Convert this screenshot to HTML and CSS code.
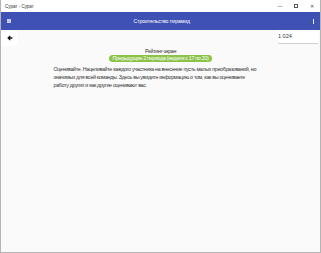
FILE: index.html
```html
<!DOCTYPE html>
<html lang="ru">
<head>
    <meta charset="UTF-8">
    <title>Сурат - Сурат</title>
    <link rel="stylesheet" href="styles.css">
</head>
<body>
    <div class="window">
        <div class="titlebar">
            <span class="app-name">Сурат - Сурат</span>
            <div class="controls">
                <span class="ctl">&#8212;</span>
                <span class="ctl max"></span>
                <span class="ctl">&#10005;</span>
            </div>
        </div>
        <div class="appbar">
            <span class="burger"></span>
            <span class="appbar-title">Строительство пирамид</span>
            <span class="kebab"></span>
        </div>
        <div class="toolbar">
            <div class="back">
                <svg width="6" height="6" viewBox="0 0 10 10">
                    <path d="M9 5H2M5.5 1.5L2 5L5.5 8.5" fill="none" stroke="#111" stroke-width="2.2"/>
                </svg>
            </div>
            <div class="value">1 024</div>
        </div>
        <div class="content">
            <div class="screen-name">Рейтинг-экран</div>
            <div class="period">Предыдущие 2 периода (недели с 17 по 20)</div>
            <p class="intro">Оценивайте. Нацеливайте каждого участника на внесение пусть малых преобразований, но значимых для всей команды. Здесь вы увидите информацию о том, как вы оцениваете<br>работу других и как другие оценивают вас.</p>
        </div>
    </div>
</body>
</html>
```

FILE: styles.css
```css
body {
    margin: 0;
    font-family: 'Liberation Sans', Arial, sans-serif;
    background: #fafafa;
}
.window {
    box-sizing: border-box;
    width: 321px;
    height: 253px;
    border: 1px solid #b4b4b4;
    border-top: none;
    background: #fafafa;
    display: flex;
    flex-direction: column;
}
.titlebar {
    height: 12px;
    background: #fff;
    display: flex;
    align-items: center;
    justify-content: space-between;
    padding-left: 4px;
}
.app-name {
    font-size: 4.5px;
    color: #333;
}
.controls {
    display: flex;
    align-items: center;
}
.ctl {
    width: 16px;
    text-align: center;
    font-size: 5px;
    color: #444;
}
.ctl.max {
    width: 4px;
    height: 4px;
    border: 1px solid #555;
    margin: 0 6px;
    box-sizing: border-box;
}
.appbar {
    height: 18px;
    background: #3f51b5;
    display: flex;
    align-items: center;
    padding: 0 6px 0 6px;
}
.burger {
    width: 4px;
    height: 4px;
    background: #c5cae9;
}
.appbar-title {
    flex: 1;
    text-align: center;
    color: #fff;
    font-size: 5.2px;
    letter-spacing: -0.1px;
}
.kebab {
    width: 1.5px;
    height: 5px;
    background: #e8eaf6;
}
.toolbar {
    display: flex;
    justify-content: space-between;
    height: 16px;
}
.back {
    width: 17px;
    height: 16px;
    background: #fff;
    border-bottom-right-radius: 3px;
    display: flex;
    align-items: center;
    justify-content: center;
}
.value {
    width: 40px;
    margin-right: 2px;
    height: 13px;
    border-bottom: 1.5px solid #d0d0d0;
    font-size: 5.5px;
    color: #333;
    line-height: 12px;
    background: #fff;
}
.content {
    width: 214px;
    margin: 2px auto 0;
    display: flex;
    flex-direction: column;
    align-items: center;
    font-size: 5.3px;
    letter-spacing: -0.3px;
}
.screen-name {
    color: #333;
    line-height: 7px;
}
.period {
    background: #8bc34a;
    color: #fff;
    line-height: 7px;
    padding: 0 4px;
    border-radius: 4px;
}
.intro {
    margin: 3px 0 0;
    line-height: 8px;
    color: #333;
}
```
